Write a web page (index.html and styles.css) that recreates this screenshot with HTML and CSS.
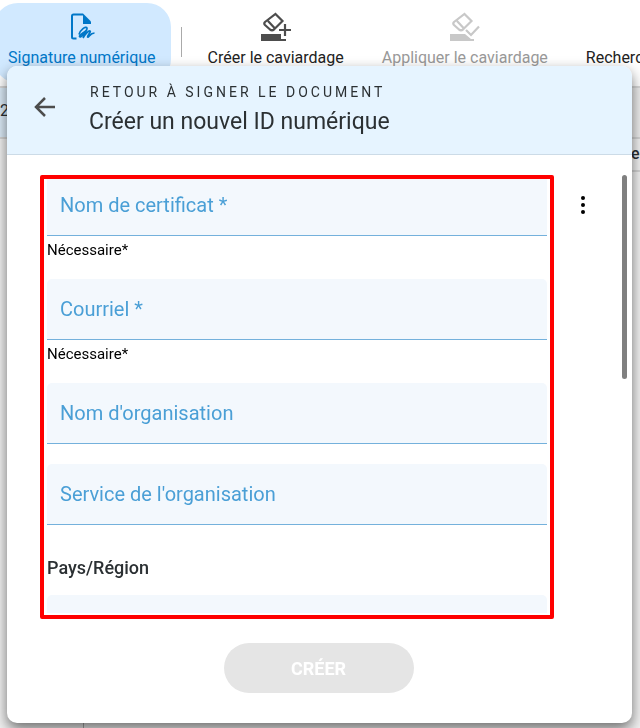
FILE: index.html
```html
<!DOCTYPE html>
<html lang="fr">
<head>
    <meta charset="UTF-8">
    <meta name="viewport" content="width=device-width, initial-scale=1">
    <title>Créer un nouvel ID numérique</title>
    <link rel="stylesheet" href="styles.css">
</head>
<body>
<div class="workspace">
    <nav class="toolbar">
        <button type="button" class="tool active">
            <svg width="28" height="32" viewBox="0 0 28 32" fill="none" stroke="currentColor" stroke-width="2">
                <path d="M8.500 26.500H5.500Q4 26.500 4 25V4Q4 2.500 5.500 2.500H15"/>
                <path d="M15 1.500L23 9.500V12H15Z" fill="currentColor" stroke="none"/>
                <path stroke-width="1.700" d="M11 22.500C12 18 18 13.500 19 16C19.500 18.500 12.500 27 11.500 24.500C11.500 22.500 16 21 19 17.500M15 26C16.500 23 20.500 18.500 22 19C23.500 19.500 19 24 19.500 25C20.500 26 22 21 26.500 21"/>
            </svg>
            <span>Signature numérique</span>
        </button>
        <span class="divider"></span>
        <button type="button" class="tool">
            <svg width="32" height="32" viewBox="0 0 32 32" fill="none" stroke="currentColor" stroke-width="2.200">
                <path d="M15.500 2L22.500 9L14 17.500Q12 19 10 17.500L5 13Q3.500 11.500 5 10ZM8 9L15 16.500"/>
                <path d="M1 22H21V27H26V29H1Z" fill="currentColor" stroke="none"/>
                <path d="M25 12V24M19 18H31"/>
            </svg>
            <span>Créer le caviardage</span>
        </button>
        <button type="button" class="tool" disabled>
            <svg width="32" height="32" viewBox="0 0 32 32" fill="none" stroke="currentColor" stroke-width="2.200">
                <path d="M15.500 2L22.500 9L14 17.500Q12 19 10 17.500L5 13Q3.500 11.500 5 10ZM8 9L15 16.500"/>
                <path d="M1 22H16L22 27H25V29H1Z" fill="currentColor" stroke="none"/>
                <path d="M17 18L22 23L30 14.500"/>
            </svg>
            <span>Appliquer le caviardage</span>
        </button>
        <button type="button" class="tool">
            <span>Rechercher</span>
        </button>
    </nav>
    <div class="subbar"><span>2</span></div>
    <div class="page-area">
        <aside class="page-list"></aside>
        <div class="page-view"><div class="page-bar"><span>ec</span></div></div>
    </div>
</div>

<div class="dialog" role="dialog" aria-labelledby="dialogTitle">
    <header class="dialog-header">
        <button type="button" class="back" aria-label="Retour">
            <svg width="24" height="24" viewBox="0 0 24 24" fill="none" stroke="currentColor" stroke-width="2.500">
                <path d="M22 12H3.500M12 3L3 12L12 21"/>
            </svg>
        </button>
        <div>
            <p class="overline">RETOUR À SIGNER LE DOCUMENT</p>
            <h1 id="dialogTitle">Créer un nouvel ID numérique</h1>
        </div>
    </header>

    <form class="dialog-form">
        <div class="form-area">
            <div class="fields">
                <div class="group">
                    <div class="field">
                        <input type="text" id="certName" required>
                        <label for="certName">Nom de certificat *</label>
                    </div>
                    <p class="hint">Nécessaire*</p>
                </div>
                <div class="group">
                    <div class="field">
                        <input type="email" id="email" required>
                        <label for="email">Courriel *</label>
                    </div>
                    <p class="hint">Nécessaire*</p>
                </div>
                <div class="group">
                    <div class="field">
                        <input type="text" id="orgName">
                        <label for="orgName">Nom d'organisation</label>
                    </div>
                </div>
                <div class="group">
                    <div class="field">
                        <input type="text" id="orgUnit">
                        <label for="orgUnit">Service de l'organisation</label>
                    </div>
                </div>
                <div class="group country">
                    <label for="country">Pays/Région</label>
                    <select id="country"><option></option></select>
                </div>
            </div>
            <button type="button" class="more" aria-label="Plus">
                <svg width="6" height="18" viewBox="0 0 6 18" fill="currentColor">
                    <circle cx="3" cy="2" r="2"/>
                    <circle cx="3" cy="9" r="2"/>
                    <circle cx="3" cy="16" r="2"/>
                </svg>
            </button>
            <div class="scroll-thumb"></div>
            <div class="highlight"></div>
        </div>
        <footer class="dialog-footer">
            <button type="submit" class="submit" disabled>CRÉER</button>
        </footer>
    </form>
</div>
</body>
</html>
```

FILE: styles.css
```css
* {
    box-sizing: border-box;
}

body {
    margin: 0;
    font-family: Roboto, "Liberation Sans", sans-serif;
    color: #2b3033;
    background: #f2f2f2;
    overflow: hidden;
}

p, h1 {
    margin: 0;
    font-weight: normal;
}

button {
    border: 0;
    padding: 0;
    background: none;
    font-family: inherit;
    color: inherit;
}

/* toolbar behind the dialog */
.workspace {
    display: flex;
    flex-direction: column;
    height: 100vh;
}

.toolbar {
    display: flex;
    height: 88px;
    padding-top: 3px;
    background: #fff;
    border-bottom: 2px solid #d8d8d8;
    overflow: hidden;
}

.tool {
    display: flex;
    flex: none;
    flex-direction: column;
    align-items: center;
    justify-content: flex-end;
    gap: 4px;
    height: 80px;
    padding: 0 19px 15px;
    font-size: 16px;
    line-height: 20px;
    white-space: nowrap;
    color: #222;
}

.tool svg {
    color: #4d4d4d;
}

.tool.active {
    margin-left: -6px;
    padding: 0 15px 15px 14px;
    border-radius: 24px;
    background: #d1e9ff;
    color: #0077c8;
}

.tool.active svg {
    color: #0077c8;
}

.tool:disabled {
    color: #999;
}

.tool:disabled svg {
    color: #c8c8c8;
}

.divider {
    flex: none;
    width: 1px;
    height: 30px;
    margin: 24px 7px 0 10px;
    background: #aaa;
}

.subbar {
    height: 51px;
    padding-top: 13px;
    background: linear-gradient(to right, #dcecf9 50%, #ededed 50%);
    border-bottom: 2px solid #d5d5d5;
    font-size: 16px;
    line-height: 20px;
}

.page-area {
    display: flex;
    flex: 1;
}

.page-list {
    width: 84px;
    border-right: 1px solid #aaa;
}

.page-view {
    flex: 1;
}

.page-bar {
    height: 33px;
    margin-right: -8px;
    padding-top: 5px;
    border-bottom: 2px solid #d5d5d5;
    text-align: right;
    font-size: 16px;
    font-weight: 500;
    line-height: 20px;
}

/* dialog */
.dialog {
    position: fixed;
    top: 66px;
    right: 8px;
    bottom: 5px;
    left: 7px;
    display: flex;
    flex-direction: column;
    border-radius: 10px;
    background: #fff;
    box-shadow: 0 6px 14px rgba(0, 0, 0, 0.55);
    overflow: hidden;
}

.dialog-header {
    display: flex;
    align-items: center;
    gap: 32px;
    height: 89px;
    padding: 0 26px 6px;
    background: #e6f4ff;
    border-bottom: 1px solid #ccdbe7;
}

.back {
    display: flex;
    color: #4d4d4d;
}

.overline {
    padding-left: 1px;
    font-size: 14px;
    line-height: 30px;
    letter-spacing: 3px;
}

.dialog-header h1 {
    font-size: 23px;
    line-height: 30px;
}

.dialog-form {
    display: flex;
    flex: 1;
    flex-direction: column;
    min-height: 0;
}

.form-area {
    position: relative;
    display: flex;
    flex: 1;
    align-items: flex-start;
    min-height: 0;
    padding: 20px 45px 0 40px;
    gap: 32px;
}

.fields {
    display: flex;
    flex: 1;
    flex-direction: column;
    gap: 20px;
    height: 100%;
    overflow: hidden;
}

.group {
    flex: none;
}

.field {
    position: relative;
}

.field input {
    display: block;
    width: 100%;
    height: 61px;
    padding: 0 13px;
    border: 0;
    border-bottom: 1px solid #74b1dc;
    border-radius: 5px 5px 0 0;
    background: #f3f8fd;
    font: 20px Roboto, sans-serif;
}

.field label {
    position: absolute;
    top: 15px;
    left: 13px;
    font-size: 20px;
    line-height: 30px;
    color: #4a9fd6;
    pointer-events: none;
}

.hint {
    height: 23px;
    padding-top: 4px;
    font-size: 15px;
    line-height: 20px;
    color: #000;
}

.country {
    display: flex;
    flex-direction: column;
    gap: 17px;
    padding-top: 13px;
}

.country label {
    font-size: 18px;
    font-weight: 500;
    line-height: 20px;
}

.country select {
    height: 61px;
    border: 0;
    border-radius: 5px 5px 0 0;
    background: #f3f8fd;
    appearance: none;
}

.more {
    display: flex;
    padding: 21px 1px;
    color: #000;
}

.scroll-thumb {
    position: absolute;
    top: 20px;
    right: 5px;
    width: 5px;
    height: 204px;
    border-radius: 3px;
    background: #808080;
}

.highlight {
    position: absolute;
    top: 20px;
    right: 78px;
    bottom: -6px;
    left: 33px;
    border: 4px solid #f00;
    border-radius: 2px;
    pointer-events: none;
}

.dialog-footer {
    display: flex;
    justify-content: center;
    padding: 30px 32px 30px 30px;
}

.submit {
    width: 190px;
    height: 50px;
    border-radius: 25px;
    background: #e5e5e5;
    font-size: 18px;
    font-weight: 700;
    color: #fff;
}
```
